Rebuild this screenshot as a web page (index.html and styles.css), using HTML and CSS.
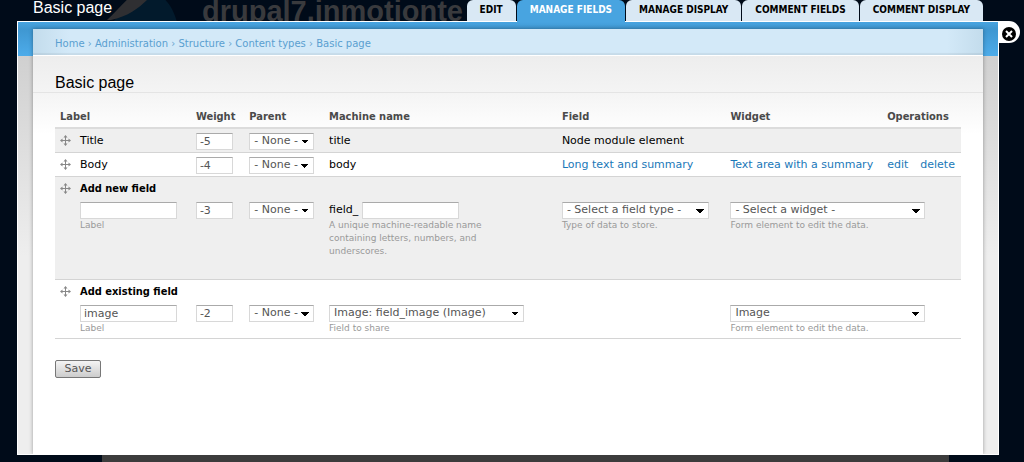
FILE: index.html
```
<!DOCTYPE html>
<html lang="en">
<head>
    <meta charset="UTF-8">
    <meta name="viewport" content="width=device-width, initial-scale=1.0">
    <title>Basic page</title>
    <link rel="stylesheet" href="styles.css">
</head>
<body>
    <!-- dimmed site behind the overlay -->
    <div class="backdrop" aria-hidden="true">
        <svg class="site-logo" width="80" height="22" viewBox="0 0 80 22">
            <path d="M10 22C22 6 40 0 50-4H58C66 2 71 11 74 22Z" fill="#021a2c"/>
            <path d="M4 20C12 13 18 5 26-2H46C36 8 26 16 8 20Z" fill="#2f2f32"/>
        </svg>
        <span class="site-name">drupal7.inmotionte</span>
        <div class="site-footer"></div>
    </div>

    <div class="overlay">
        <header class="overlay-top">
            <h1 class="overlay-title">Basic page</h1>
            <nav class="tabs">
                <a class="tab" href="#">EDIT</a>
                <a class="tab active" href="#">MANAGE FIELDS</a>
                <a class="tab" href="#">MANAGE DISPLAY</a>
                <a class="tab" href="#">COMMENT FIELDS</a>
                <a class="tab" href="#">COMMENT DISPLAY</a>
            </nav>
        </header>

        <div class="overlay-body">
            <button class="close" aria-label="Close overlay">
                <svg width="14" height="14" viewBox="0 0 14 14">
                    <circle cx="7" cy="7" r="7" fill="#000"/>
                    <path d="M4 4L10 10M10 4L4 10" stroke="#fff" stroke-width="2"/>
                </svg>
            </button>
            <div class="panel">
                <nav class="breadcrumb">
                    <a href="#">Home</a> › <a href="#">Administration</a> › <a href="#">Structure</a> › <a href="#">Content types</a> › <a href="#">Basic page</a>
                </nav>
                <main class="content">
                    <h2 class="page-title">Basic page</h2>
                    <form>
                        <table class="fields">
                            <colgroup>
                                <col class="col-label"><col class="col-weight"><col class="col-parent"><col class="col-machine"><col class="col-field"><col class="col-widget"><col>
                            </colgroup>
                            <thead>
                                <tr><th>Label</th><th>Weight</th><th>Parent</th><th>Machine name</th><th>Field</th><th>Widget</th><th>Operations</th></tr>
                            </thead>
                            <tbody>
                                <tr class="odd">
                                    <td><div class="drag"><svg class="handle" width="11" height="11" viewBox="0 0 11 11"><use href="#move"/></svg><span>Title</span></div></td>
                                    <td><input class="text weight" type="text" value="-5" aria-label="Weight for Title"></td>
                                    <td><select class="select parent" aria-label="Parent for Title"><option>- None -</option></select></td>
                                    <td>title</td>
                                    <td>Node module element</td>
                                    <td></td>
                                    <td></td>
                                </tr>
                                <tr>
                                    <td><div class="drag"><svg class="handle" width="11" height="11" viewBox="0 0 11 11"><use href="#move"/></svg><span>Body</span></div></td>
                                    <td><input class="text weight" type="text" value="-4" aria-label="Weight for Body"></td>
                                    <td><select class="select parent" aria-label="Parent for Body"><option>- None -</option></select></td>
                                    <td>body</td>
                                    <td><a href="#">Long text and summary</a></td>
                                    <td><a href="#">Text area with a summary</a></td>
                                    <td><div class="ops"><a href="#">edit</a><a href="#">delete</a></div></td>
                                </tr>
                                <tr class="odd add add-new">
                                    <td>
                                        <div class="drag">
                                            <svg class="handle" width="11" height="11" viewBox="0 0 11 11"><use href="#move"/></svg>
                                            <div>
                                                <strong class="add-title">Add new field</strong>
                                                <input class="text name" type="text" id="new-label">
                                                <label class="hint" for="new-label">Label</label>
                                            </div>
                                        </div>
                                    </td>
                                    <td><input class="text weight" type="text" value="-3" aria-label="Weight for new field"></td>
                                    <td><select class="select parent" aria-label="Parent for new field"><option>- None -</option></select></td>
                                    <td>
                                        <div class="prefixed"><span>field_</span><input class="text name" type="text" id="new-name"></div>
                                        <label class="hint narrow" for="new-name">A unique machine-readable name containing letters, numbers, and underscores.</label>
                                    </td>
                                    <td>
                                        <select class="select type" id="new-type"><option>- Select a field type -</option></select>
                                        <label class="hint" for="new-type">Type of data to store.</label>
                                    </td>
                                    <td colspan="2">
                                        <select class="select wide" id="new-widget"><option>- Select a widget -</option></select>
                                        <label class="hint" for="new-widget">Form element to edit the data.</label>
                                    </td>
                                </tr>
                                <tr class="add">
                                    <td>
                                        <div class="drag">
                                            <svg class="handle" width="11" height="11" viewBox="0 0 11 11"><use href="#move"/></svg>
                                            <div>
                                                <strong class="add-title">Add existing field</strong>
                                                <input class="text name" type="text" value="image" id="old-label">
                                                <label class="hint" for="old-label">Label</label>
                                            </div>
                                        </div>
                                    </td>
                                    <td><input class="text weight" type="text" value="-2" aria-label="Weight for existing field"></td>
                                    <td><select class="select parent" aria-label="Parent for existing field"><option>- None -</option></select></td>
                                    <td colspan="2">
                                        <select class="select wide" id="old-field"><option>Image: field_image (Image)</option></select>
                                        <label class="hint" for="old-field">Field to share</label>
                                    </td>
                                    <td colspan="2">
                                        <select class="select wide" id="old-widget"><option>Image</option></select>
                                        <label class="hint" for="old-widget">Form element to edit the data.</label>
                                    </td>
                                </tr>
                            </tbody>
                        </table>
                        <button class="save" type="button">Save</button>
                    </form>
                </main>
            </div>
        </div>
    </div>

    <svg class="sprite" width="0" height="0">
        <symbol id="move" viewBox="0 0 11 11">
            <path d="M5.5 1V10M1 5.5H10" stroke="#888" fill="none"/>
            <path d="M5.5 0L7.5 2.5H3.5ZM5.5 11L3.5 8.5H7.5ZM0 5.5L2.5 3.5V7.5ZM11 5.5L8.5 7.5V3.5Z" fill="#888"/>
        </symbol>
    </svg>
</body>
</html>
```
FILE: styles.css
```
*{margin:0;padding:0;box-sizing:border-box}
body{min-height:100vh;display:flex;flex-direction:column;background:#000b19;font:11px/14px Verdana,"DejaVu Sans",sans-serif;color:#000;overflow:hidden}
a{color:#1a78b8;text-decoration:none}
.sprite{position:absolute}

/* Site behind */
.backdrop{position:absolute;inset:0;overflow:hidden;z-index:-1}
.site-logo{position:absolute;left:103px;top:0}
.site-name{position:absolute;left:202px;top:-5px;font:bold 29px/32px "Liberation Sans",Arial,sans-serif;color:#393a3d}
.site-footer{position:absolute;left:10%;right:75px;bottom:0;height:7px;background:#3c3c3c}

/* Overlay */
.overlay{flex:1;display:flex;flex-direction:column;margin:0 25px 7px 17px}
.overlay-top{display:flex;justify-content:space-between;height:21px;padding:0 16px}
.overlay-title{font:16px/16px "Liberation Sans",Arial,sans-serif;color:#fff}
.tabs{display:flex;gap:1px}
.tab{height:21px;padding:3px 13px 0;border-radius:6px 6px 0 0;background:#d9e8f4;color:#000;font:bold 10px/14px "DejaVu Sans Condensed","DejaVu Sans",sans-serif;white-space:nowrap}
.tab.active{position:relative;z-index:1;height:22px;background:#48a4e0;color:#fff}
.overlay-body{flex:1;display:flex;position:relative;padding:7px 15px 0;border:1px solid #fff;background:linear-gradient(#48a4e0,#3f97d1 7px,#4dacea) 0 0/100% 34px no-repeat,linear-gradient(#d0d0d0,#eee 200px) 0 34px no-repeat}
.close{position:absolute;left:100%;top:-1px;width:22px;height:22px;padding:4px 0 0 4px;border:0;border-radius:0 11px 11px 0;background:#fff;cursor:pointer}
.close svg{display:block}
.panel{flex:1;display:flex;flex-direction:column;box-shadow:0 0 4px rgba(0,0,0,.35);clip-path:inset(-4px -8px 0 -8px)}
.breadcrumb{height:27px;padding:8px 22px 0;border-bottom:1px solid #fff;background:linear-gradient(90deg,#c3dcec,#d3e9f8 36px,#d3e9f8 calc(100% - 36px),#c3dcec);color:#6aa5cf;font-size:10px;line-height:14px;box-shadow:inset 0 -2px 1px rgba(0,0,0,.06)}
.breadcrumb a{color:#5a9fd0}
.content{flex:1;padding:17px 22px;background:linear-gradient(#e4e4e4,#e4e4e4) 0 36px/100% 1px no-repeat,linear-gradient(#ededed,#f4f4f4 36px,#fff 78px)}
.page-title{font:16px/20px "Liberation Sans",Arial,sans-serif}

/* Fields table */
.fields{width:100%;margin-top:13px;table-layout:fixed;border-collapse:collapse}
.col-label{width:15%}
.col-weight{width:5.9%}
.col-parent{width:8.8%}
.col-machine{width:25.7%}
.col-field{width:18.6%}
.col-widget{width:17.3%}
.fields th,.fields strong{font-family:"DejaVu Sans Condensed","DejaVu Sans",sans-serif}
.fields th{height:22px;padding:0 5px;border-bottom:2px solid #dcdcdc;text-align:left;color:#4a4a4a}
.fields td{height:24px;padding:2px 5px 0;border-bottom:1px solid #d4d4d4;white-space:nowrap}
.fields .odd{background:#efefef}
.fields .add td{padding-top:25px;padding-bottom:3px;vertical-align:top}
.fields .add td:first-child{padding-top:5px}
.fields .add-new td{height:103px}
.drag{display:flex;gap:9px}
.handle{flex:none;margin-top:1px}
.add-title{display:block;height:20px}
.ops{display:flex;gap:12px}
.prefixed{display:flex;gap:4px;align-items:center}
.text,.select{display:block;height:17px;border:1px solid #d8d8d8;border-top-color:#aaa;background-color:#fff;color:#555;font:inherit}
.text{padding:0 3px}
.select{appearance:none;padding:0 4px;border-radius:0;background-image:linear-gradient(45deg,transparent 50%,#000 50%),linear-gradient(-45deg,transparent 50%,#000 50%);background-repeat:no-repeat;background-size:4px 4px;background-position:right 8px top 6px,right 4px top 6px}
.weight{width:37px}
.name{width:97px}
.parent{width:65px}
.type{width:147px}
.wide{width:195px}
.hint{display:block;color:#999;font-size:9px;line-height:13px}
.hint.narrow{width:170px;white-space:normal}
.save{display:block;margin-top:21px;width:46px;height:18px;border:1px solid #777;border-radius:2px;background:linear-gradient(#f4f4f4,#ccc);color:#555;font:inherit;cursor:pointer}
```
